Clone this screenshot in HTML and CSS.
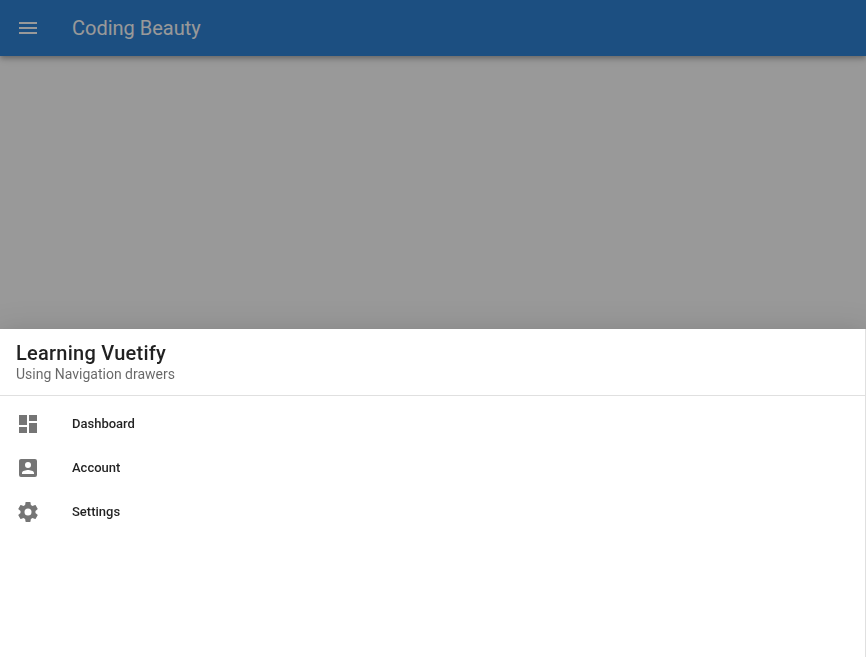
FILE: index.html
```html
<!DOCTYPE html>
<html lang="en">
<head>
<meta charset="utf-8">
<title>Coding Beauty</title>
<link rel="stylesheet" href="styles.css">
</head>
<body>
<header class="app-bar">
  <button class="nav-icon" aria-label="Menu">
    <svg class="icon" viewBox="0 0 24 24"><path d="M3,6H21V8H3V6M3,11H21V13H3V11M3,16H21V18H3V16Z"/></svg>
  </button>
  <div class="app-title">Coding Beauty</div>
</header>
<div class="scrim"></div>
<nav class="drawer">
  <div class="drawer-head">
    <div class="drawer-title">Learning Vuetify</div>
    <div class="drawer-subtitle">Using Navigation drawers</div>
  </div>
  <hr class="divider">
  <ul class="menu">
    <li class="menu-item">
      <svg class="icon" viewBox="0 0 24 24"><path d="M13,3V9H21V3M13,21H21V11H13M3,21H11V15H3M3,13H11V3H3V13Z"/></svg>
      <span class="menu-label">Dashboard</span>
    </li>
    <li class="menu-item">
      <svg class="icon" viewBox="0 0 24 24"><path d="M6,17C6,15 10,14.1 12,14.1C14,14.1 18,15 18,17V18H6M15,9A3,3 0 0,1 12,12A3,3 0 0,1 9,9A3,3 0 0,1 12,6A3,3 0 0,1 15,9M3,5V19A2,2 0 0,0 5,21H19A2,2 0 0,0 21,19V5A2,2 0 0,0 19,3H5C3.89,3 3,3.9 3,5Z"/></svg>
      <span class="menu-label">Account</span>
    </li>
    <li class="menu-item">
      <svg class="icon" viewBox="0 0 24 24"><path d="M12,15.5A3.5,3.5 0 0,1 8.5,12A3.5,3.5 0 0,1 12,8.5A3.5,3.5 0 0,1 15.5,12A3.5,3.5 0 0,1 12,15.5M19.43,12.97C19.47,12.65 19.5,12.33 19.5,12C19.5,11.67 19.47,11.34 19.43,11L21.54,9.37C21.73,9.22 21.78,8.95 21.66,8.73L19.66,5.27C19.54,5.05 19.27,4.96 19.05,5.05L16.56,6.05C16.04,5.66 15.5,5.32 14.87,5.07L14.5,2.42C14.46,2.18 14.25,2 14,2H10C9.75,2 9.54,2.18 9.5,2.42L9.13,5.07C8.5,5.32 7.96,5.66 7.44,6.05L4.95,5.05C4.73,4.96 4.46,5.05 4.34,5.27L2.34,8.73C2.21,8.95 2.27,9.22 2.46,9.37L4.57,11C4.53,11.34 4.5,11.67 4.5,12C4.5,12.33 4.53,12.65 4.57,12.97L2.46,14.63C2.27,14.78 2.21,15.05 2.34,15.27L4.34,18.73C4.46,18.95 4.73,19.03 4.95,18.95L7.44,17.94C7.96,18.34 8.5,18.68 9.13,18.93L9.5,21.58C9.54,21.82 9.75,22 10,22H14C14.25,22 14.46,21.82 14.5,21.58L14.87,18.93C15.5,18.67 16.04,18.34 16.56,17.94L19.05,18.95C19.27,19.03 19.54,18.95 19.66,18.73L21.66,15.27C21.78,15.05 21.73,14.78 21.54,14.63L19.43,12.97Z"/></svg>
      <span class="menu-label">Settings</span>
    </li>
  </ul>
</nav>
</body>
</html>
```
FILE: styles.css
```css
* {
  box-sizing: border-box;
}

html,
body {
  margin: 0;
  height: 100%;
  overflow: hidden;
}

body {
  background: #fff;
  font-family: Roboto, "Liberation Sans", sans-serif;
  color: rgba(0, 0, 0, 0.87);
}

.icon {
  display: block;
  width: 24px;
  height: 24px;
  fill: currentColor;
}

.app-bar {
  display: flex;
  align-items: center;
  height: 56px;
  padding: 0 16px;
  background: #1976d2;
  color: #fff;
  box-shadow: 0 2px 4px -1px rgba(0, 0, 0, 0.2), 0 4px 5px 0 rgba(0, 0, 0, 0.14), 0 1px 10px 0 rgba(0, 0, 0, 0.12);
}

.nav-icon {
  padding: 0;
  margin: 0;
  border: 0;
  background: none;
  color: inherit;
}

.app-title {
  margin-left: 32px;
  font-size: 20px;
  font-weight: 400;
  line-height: 28px;
  white-space: nowrap;
}

.scrim {
  position: fixed;
  inset: 0;
  background: #212121;
  opacity: 0.46;
}

.drawer {
  position: fixed;
  left: 0;
  right: 0;
  bottom: 0;
  height: 50%;
  background: #fff;
  border-right: 1px solid rgba(0, 0, 0, 0.12);
  box-shadow: 0 8px 10px -5px rgba(0, 0, 0, 0.2), 0 16px 24px 2px rgba(0, 0, 0, 0.14), 0 6px 30px 5px rgba(0, 0, 0, 0.12);
}

.drawer-head {
  display: flex;
  flex-direction: column;
  justify-content: center;
  height: 66px;
  padding: 0 16px;
}

.drawer-title {
  font-size: 20px;
  font-weight: 500;
  line-height: 24px;
  letter-spacing: 0.0125em;
}

.drawer-subtitle {
  font-size: 14px;
  line-height: 18px;
  color: rgba(0, 0, 0, 0.6);
}

.divider {
  height: 1px;
  margin: 0;
  border: 0;
  background: rgba(0, 0, 0, 0.12);
}

.menu {
  list-style: none;
  margin: 0;
  padding: 6px 0 0;
}

.menu-item {
  display: flex;
  align-items: center;
  gap: 32px;
  height: 44px;
  padding: 0 16px;
  color: rgba(0, 0, 0, 0.54);
}

.menu-label {
  font-size: 13px;
  font-weight: 500;
  line-height: 16px;
  color: rgba(0, 0, 0, 0.87);
}
```
